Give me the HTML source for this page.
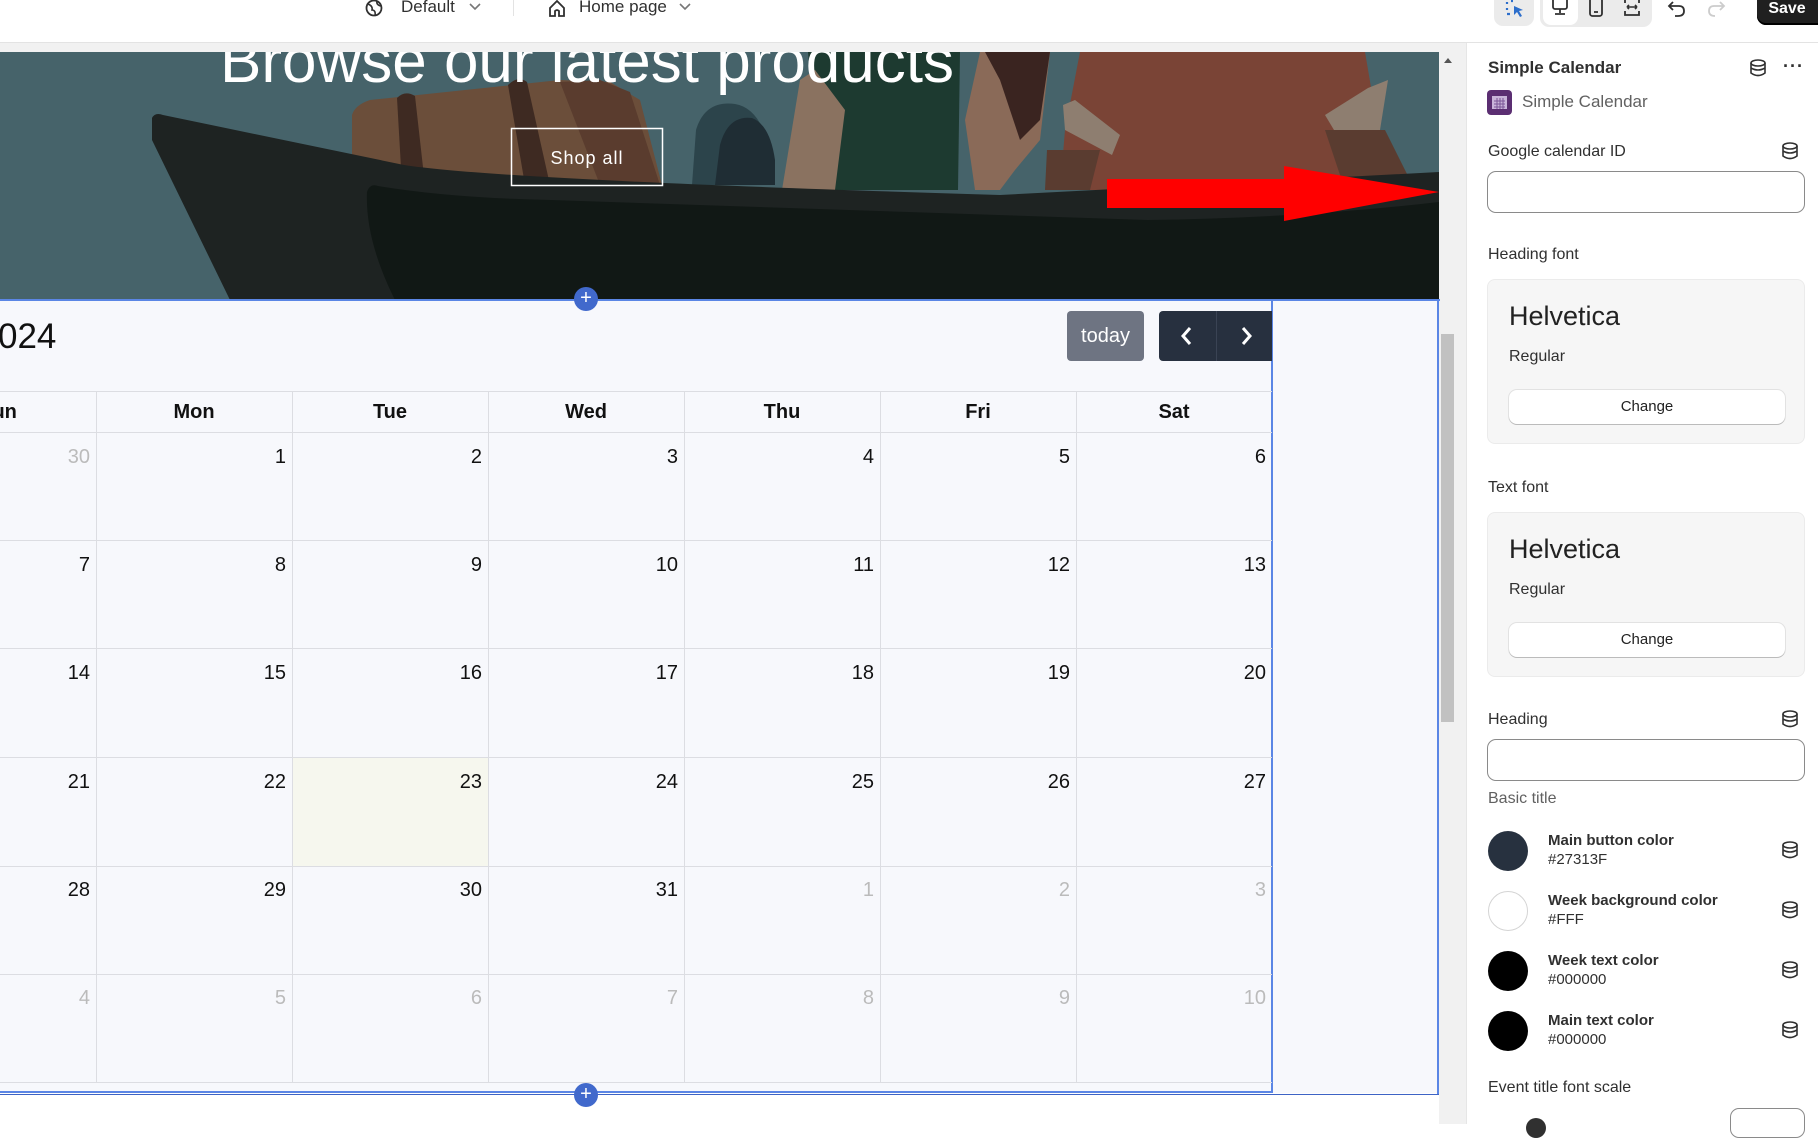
<!DOCTYPE html>
<html><head><meta charset="utf-8">
<style>
*{box-sizing:border-box;margin:0;padding:0}
body{width:1818px;height:1124px;overflow:hidden;background:#fff;font-family:"Liberation Sans",Arial,sans-serif;position:relative;color:#303030}
.abs{position:absolute}
.top{left:0;top:0;width:1818px;height:43px;background:#fff;border-bottom:1px solid #e3e3e3}
.gap{left:0;top:43px;width:1466px;height:9px;background:#f1f1f1}
.cal{left:0;top:301px;width:1439px;height:792px;background:#f7f8fc}
.col{position:absolute;top:392px;height:690px;width:1px;background:#dcdde2}
.row{position:absolute;left:0;width:1272px;height:1px;background:#dcdde2}
.dh{position:absolute;top:392px;height:40px;line-height:40px;text-align:center;font-weight:bold;font-size:20px;color:#111;width:196px}
.dn{position:absolute;font-size:20px;color:#111;text-align:right;width:180px}
.g{color:#bbb}
.panel{left:1466px;top:43px;width:352px;height:1081px;background:#fff;border-left:1px solid #e6e6e6}
.lbl{position:absolute;left:1488px;font-size:16px;color:#303030}
.inp{position:absolute;left:1487px;width:318px;border:1px solid #8a8a8a;border-radius:9px;background:#fff}
.box{position:absolute;left:1487px;width:318px;height:165px;background:#f6f6f6;border:1px solid #ebebeb;border-radius:8px}
.hv{position:absolute;left:21px;top:21px;font-size:27px;color:#222}
.rg{position:absolute;left:21px;top:68px;font-size:16px;color:#303030}
.ch{position:absolute;left:21px;top:110px;width:276px;height:34px;background:#fff;border-radius:8px;box-shadow:0 1px 0 #bbb,0 0 0 1px #e2e2e2;text-align:center;line-height:34px;font-size:15px;color:#222}
.sw{position:absolute;left:1488px;width:40px;height:40px;border-radius:50%}
.swt{position:absolute;left:1548px;font-size:15px;line-height:19px}
.swt b{color:#303030}
.db{position:absolute;left:1781px}
</style></head><body>
<div class="abs top"></div>
<svg class="abs" style="left:364px;top:0" width="20" height="18" viewBox="0 0 20 18"><circle cx="10" cy="8" r="7.5" fill="none" stroke="#303030" stroke-width="1.8"/><path d="M4 4 Q9 6 8 10 Q12 10 11 16 M13 1 Q12 5 17 6" fill="none" stroke="#303030" stroke-width="1.6"/></svg>
<div class="abs" style="left:401px;top:-3px;font-size:17px;color:#303030">Default</div>
<svg class="abs" style="left:469px;top:3px" width="12" height="8"><path d="M1 1 L6 6 L11 1" fill="none" stroke="#777" stroke-width="1.6"/></svg>
<div class="abs" style="left:513px;top:0;width:1px;height:16px;background:#e3e3e3"></div>
<svg class="abs" style="left:547px;top:0" width="20" height="18"><path d="M3 16 V8 L10 1 L17 8 V16 H12 V11 Q10 9 8 11 V16 Z" fill="none" stroke="#303030" stroke-width="1.8"/></svg>
<div class="abs" style="left:579px;top:-3px;font-size:17px;color:#303030">Home page</div>
<svg class="abs" style="left:679px;top:3px" width="12" height="8"><path d="M1 1 L6 6 L11 1" fill="none" stroke="#777" stroke-width="1.6"/></svg>
<div class="abs" style="left:1494px;top:-10px;width:40px;height:36px;background:#ebebeb;border-radius:9px"></div>
<svg class="abs" style="left:1505px;top:0" width="20" height="18"><path d="M2 2 V4 M2 8 V10 M2 14 H5 M6 1 H8" stroke="#2c6ecb" stroke-width="2.2"/><path d="M9 6 L18 10 L14 11 L17 16 L15 17 L12 12 L9 15 Z" fill="#2c6ecb"/></svg>
<div class="abs" style="left:1540px;top:-10px;width:112px;height:37px;background:#ebebeb;border-radius:9px"></div>
<div class="abs" style="left:1543px;top:-10px;width:35px;height:35px;background:#fff;border-radius:8px"></div>
<svg class="abs" style="left:1550px;top:0" width="20" height="18"><rect x="3" y="-2" width="14" height="11" rx="2" fill="none" stroke="#303030" stroke-width="1.8"/><path d="M10 9 V13 M5 14 H15" stroke="#303030" stroke-width="1.8"/></svg>
<svg class="abs" style="left:1587px;top:0" width="18" height="18"><rect x="3" y="-2" width="12" height="18" rx="2.5" fill="none" stroke="#303030" stroke-width="1.8"/><path d="M7 12 H11" stroke="#303030" stroke-width="1.8"/></svg>
<svg class="abs" style="left:1622px;top:0" width="20" height="18"><path d="M3 3 V-1 H17 V3 M3 11 V15 H17 V11" fill="none" stroke="#303030" stroke-width="1.8"/><path d="M5 7 H15 M5 7 L7 5 M5 7 L7 9 M15 7 L13 5 M15 7 L13 9" stroke="#303030" stroke-width="1.6" fill="none"/></svg>
<svg class="abs" style="left:1667px;top:0" width="20" height="18"><path d="M6 2 L2 6 L6 10 M2 6 H12 Q17 6 17 11 Q17 16 11 16 H8" fill="none" stroke="#303030" stroke-width="1.8"/></svg>
<svg class="abs" style="left:1706px;top:0" width="20" height="18"><path d="M14 2 L18 6 L14 10 M18 6 H8 Q3 6 3 11 Q3 16 9 16" fill="none" stroke="#ccc" stroke-width="1.8"/></svg>
<div class="abs" style="left:1757px;top:-10px;width:70px;height:35px;background:#202020;border-radius:9px;box-shadow:inset 0 -2px 0 #000;color:#fff;font-weight:bold;font-size:16px;text-align:center;line-height:26px;padding-top:6px;padding-right:10px">Save</div>
<div class="abs gap"></div>

<!-- hero -->
<svg class="abs" style="left:0;top:52px" width="1439" height="248" viewBox="0 52 1439 248">
<rect x="0" y="52" width="1439" height="248" fill="#46636a"/>
<!-- luggage -->
<path d="M352 115 Q355 105 370 100 L560 80 L610 82 L640 100 L662 185 L352 185 Z" fill="#6b4e3a"/>
<path d="M397 98 Q405 90 415 96 L425 185 L402 185 Z" fill="#3e2a22"/>
<path d="M508 85 Q518 75 527 82 L550 185 L525 185 Z" fill="#3e2a22"/>
<path d="M560 82 L600 80 L630 92 L660 185 L600 185 Z" fill="#5a3c2e"/>
<!-- arches -->
<path d="M692 185 L696 130 Q705 100 735 104 Q760 108 770 150 L770 185 Z" fill="#2c444b"/>
<path d="M715 185 L720 145 Q728 115 752 118 Q770 125 775 160 L775 185 Z" fill="#1f2d34"/>
<!-- figures -->
<path d="M808 52 L960 52 L958 190 L820 190 Z" fill="#1d3a30"/>
<path d="M800 80 L815 70 L845 110 L835 190 L782 190 Z" fill="#8a7260"/>
<path d="M980 52 L1050 52 L1040 140 L1015 170 L1000 190 L975 190 L965 120 Z" fill="#8a6a58"/>
<path d="M985 52 L1050 52 L1040 120 L1020 140 L1000 80 Z" fill="#3a2420"/>
<path d="M1080 52 L1365 52 L1380 140 L1360 190 L1060 190 L1065 130 Z" fill="#7a4436"/>
<path d="M1063 105 L1075 100 L1120 135 L1112 155 L1065 130 Z" fill="#8e7e70"/>
<path d="M1368 88 L1388 80 L1380 130 L1340 140 L1325 115 Z" fill="#8e7e70"/>
<path d="M1325 130 L1385 130 L1415 190 L1345 190 Z" fill="#5a3c30"/>
<path d="M1047 150 L1100 150 L1090 190 L1045 190 Z" fill="#5a3c30"/>
<!-- boat -->
<path d="M152 118 Q155 112 163 115 L404 165 Q500 180 1000 195 L1439 172 L1439 300 L230 300 L152 140 Z" fill="#1e2322"/>
<path d="M367 192 Q370 183 378 186 Q450 198 551 200 L1148 220 Q1300 218 1439 202 L1439 300 L395 300 Q365 240 367 192 Z" fill="#111815"/>
<text x="587" y="82" text-anchor="middle" font-family="Liberation Sans,sans-serif" font-size="62" fill="#fff">Browse our latest products</text>
<rect x="511.5" y="128.5" width="151" height="57" fill="none" stroke="#fff" stroke-width="1.5"/>
<text x="587" y="164" text-anchor="middle" font-family="Liberation Sans,sans-serif" font-size="18" fill="#fff" letter-spacing="1">Shop all</text>
<path d="M1107 179 H1284 V166 L1439 192 L1284 221 V208 H1107 Z" fill="#ff0000"/>
</svg>
<svg class="abs" style="left:1439px;top:160px" width="30" height="70"><path d="M0 12 L29 34 L0 56 Z" fill="#ff0000"/></svg>
<div class="abs" style="left:1439px;top:52px;width:27px;height:1072px;background:#f1f1f1"></div>
<div class="abs" style="left:1441px;top:334px;width:13px;height:388px;background:#c1c1c1"></div>
<div class="abs" style="left:1444px;top:58px;width:0;height:0;border-left:4px solid transparent;border-right:4px solid transparent;border-bottom:5px solid #555"></div>

<!-- calendar -->
<div class="abs cal"></div>
<div class="abs" style="left:0;top:299px;width:1440px;height:2px;background:#5b86e5"></div>
<div class="abs" style="left:1437px;top:300px;width:2px;height:795px;background:#5b86e5"></div>
<div class="abs" style="left:1271px;top:301px;width:2px;height:790px;background:#5b86e5"></div>
<div class="abs" style="left:0;top:1091px;width:1273px;height:2px;background:#5b86e5"></div>
<div class="abs" style="left:0;top:1094px;width:1439px;height:1px;background:#3d63c5"></div>
<div class="abs" style="left:574px;top:287px;width:24px;height:24px;border-radius:50%;background:#4169cc;color:#fff;font-size:20px;line-height:23px;text-align:center">+</div>
<div class="abs" style="left:574px;top:1083px;width:24px;height:24px;border-radius:50%;background:#4169cc;color:#fff;font-size:20px;line-height:23px;text-align:center">+</div>
<div class="abs" style="left:-2px;top:317px;font-size:35px;color:#111">024</div>
<div class="abs" style="left:1067px;top:311px;width:77px;height:50px;background:#6e7482;border-radius:4px;color:#fff;font-size:20px;text-align:center;line-height:50px">today</div>
<div class="abs" style="left:1159px;top:311px;width:113px;height:50px;background:#27303f;border-radius:4px 0 0 4px"></div>
<div class="abs" style="left:1216px;top:311px;width:1px;height:50px;background:#3a4354"></div>
<svg class="abs" style="left:1159px;top:311px" width="113" height="50"><path d="M31 17 L24 25 L31 33 M84 17 L91 25 L84 33" fill="none" stroke="#fff" stroke-width="3"/></svg>
<div class="abs" style="left:292px;top:757px;width:196px;height:109px;background:#f6f7ee"></div>
<div class="row" style="top:391px"></div>
<div class="row" style="top:432px"></div>
<div class="row" style="top:540px"></div>
<div class="row" style="top:648px"></div>
<div class="row" style="top:757px"></div>
<div class="row" style="top:866px"></div>
<div class="row" style="top:974px"></div>
<div class="row" style="top:1082px"></div>
<div class="col" style="left:96px"></div>
<div class="col" style="left:292px"></div>
<div class="col" style="left:488px"></div>
<div class="col" style="left:684px"></div>
<div class="col" style="left:880px"></div>
<div class="col" style="left:1076px"></div>
<div class="dh" style="left:-100px">Sun</div>
<div class="dh" style="left:96px">Mon</div>
<div class="dh" style="left:292px">Tue</div>
<div class="dh" style="left:488px">Wed</div>
<div class="dh" style="left:684px">Thu</div>
<div class="dh" style="left:880px">Fri</div>
<div class="dh" style="left:1076px">Sat</div>

<!-- panel -->
<div class="abs panel"></div>
<div class="abs" style="left:1488px;top:58px;font-size:17px;font-weight:bold;color:#303030">Simple Calendar</div>
<svg class="abs db" style="left:1749px;top:59px" width="18" height="18"><g fill="none" stroke="#303030" stroke-width="1.6"><ellipse cx="9" cy="4" rx="7" ry="3"/><path d="M2 4 V14 Q9 19 16 14 V4 M2 9 Q9 13 16 9"/></g></svg>
<div class="abs" style="left:1783px;top:56px;font-size:18px;font-weight:bold;letter-spacing:1px">···</div>
<div class="abs" style="left:1487px;top:90px;width:25px;height:25px;border-radius:4px;background:#5b2e72"></div>
<svg class="abs" style="left:1491px;top:93px" width="17" height="18"><rect x="1" y="3" width="15" height="13" fill="#c9b4da"/><path d="M3 8 H14 M3 11 H14 M3 14 H14 M6 5 V16 M9 5 V16 M12 5 V16" stroke="#7b5597" stroke-width="1"/></svg>
<div class="abs" style="left:1522px;top:92px;font-size:17px;color:#616161">Simple Calendar</div>
<div class="lbl" style="top:143px">Google calendar ID</div>
<svg class="abs db" style="top:142px" width="18" height="18"><g fill="none" stroke="#303030" stroke-width="1.6"><ellipse cx="9" cy="4" rx="7" ry="3"/><path d="M2 4 V14 Q9 19 16 14 V4 M2 9 Q9 13 16 9"/></g></svg>
<div class="inp" style="top:171px;height:42px"></div>
<div class="lbl" style="top:246px">Heading font</div>
<div class="box" style="top:279px"><div class="hv">Helvetica</div><div class="rg">Regular</div><div class="ch">Change</div></div>
<div class="lbl" style="top:479px">Text font</div>
<div class="box" style="top:512px"><div class="hv">Helvetica</div><div class="rg">Regular</div><div class="ch">Change</div></div>
<div class="lbl" style="top:711px">Heading</div>
<svg class="abs db" style="top:710px" width="18" height="18"><g fill="none" stroke="#303030" stroke-width="1.6"><ellipse cx="9" cy="4" rx="7" ry="3"/><path d="M2 4 V14 Q9 19 16 14 V4 M2 9 Q9 13 16 9"/></g></svg>
<div class="inp" style="top:739px;height:42px"></div>
<div class="lbl" style="top:790px;color:#616161">Basic title</div>

<div class="sw" style="top:831px;background:#27313f"></div>
<div class="swt" style="top:831px"><b>Main button color</b><br>#27313F</div>
<div class="sw" style="top:891px;background:#fff;border:1px solid #d4d4d4"></div>
<div class="swt" style="top:891px"><b>Week background color</b><br>#FFF</div>
<div class="sw" style="top:951px;background:#000"></div>
<div class="swt" style="top:951px"><b>Week text color</b><br>#000000</div>
<div class="sw" style="top:1011px;background:#000"></div>
<div class="swt" style="top:1011px"><b>Main text color</b><br>#000000</div>
<svg class="abs db" style="top:841px" width="18" height="18"><g fill="none" stroke="#303030" stroke-width="1.6"><ellipse cx="9" cy="4" rx="7" ry="3"/><path d="M2 4 V14 Q9 19 16 14 V4 M2 9 Q9 13 16 9"/></g></svg>
<svg class="abs db" style="top:901px" width="18" height="18"><g fill="none" stroke="#303030" stroke-width="1.6"><ellipse cx="9" cy="4" rx="7" ry="3"/><path d="M2 4 V14 Q9 19 16 14 V4 M2 9 Q9 13 16 9"/></g></svg>
<svg class="abs db" style="top:961px" width="18" height="18"><g fill="none" stroke="#303030" stroke-width="1.6"><ellipse cx="9" cy="4" rx="7" ry="3"/><path d="M2 4 V14 Q9 19 16 14 V4 M2 9 Q9 13 16 9"/></g></svg>
<svg class="abs db" style="top:1021px" width="18" height="18"><g fill="none" stroke="#303030" stroke-width="1.6"><ellipse cx="9" cy="4" rx="7" ry="3"/><path d="M2 4 V14 Q9 19 16 14 V4 M2 9 Q9 13 16 9"/></g></svg>
<div class="lbl" style="top:1079px">Event title font scale</div>
<div class="abs" style="left:1730px;top:1108px;width:75px;height:30px;border:1px solid #8a8a8a;border-radius:9px;background:#fff"></div>
<div class="abs" style="left:1526px;top:1118px;width:20px;height:20px;border-radius:50%;background:#303030"></div>

<div class="dn g" style="left:-90px;top:446px">30</div>
<div class="dn" style="left:106px;top:446px">1</div>
<div class="dn" style="left:302px;top:446px">2</div>
<div class="dn" style="left:498px;top:446px">3</div>
<div class="dn" style="left:694px;top:446px">4</div>
<div class="dn" style="left:890px;top:446px">5</div>
<div class="dn" style="left:1086px;top:446px">6</div>
<div class="dn" style="left:-90px;top:554px">7</div>
<div class="dn" style="left:106px;top:554px">8</div>
<div class="dn" style="left:302px;top:554px">9</div>
<div class="dn" style="left:498px;top:554px">10</div>
<div class="dn" style="left:694px;top:554px">11</div>
<div class="dn" style="left:890px;top:554px">12</div>
<div class="dn" style="left:1086px;top:554px">13</div>
<div class="dn" style="left:-90px;top:662px">14</div>
<div class="dn" style="left:106px;top:662px">15</div>
<div class="dn" style="left:302px;top:662px">16</div>
<div class="dn" style="left:498px;top:662px">17</div>
<div class="dn" style="left:694px;top:662px">18</div>
<div class="dn" style="left:890px;top:662px">19</div>
<div class="dn" style="left:1086px;top:662px">20</div>
<div class="dn" style="left:-90px;top:771px">21</div>
<div class="dn" style="left:106px;top:771px">22</div>
<div class="dn" style="left:302px;top:771px">23</div>
<div class="dn" style="left:498px;top:771px">24</div>
<div class="dn" style="left:694px;top:771px">25</div>
<div class="dn" style="left:890px;top:771px">26</div>
<div class="dn" style="left:1086px;top:771px">27</div>
<div class="dn" style="left:-90px;top:879px">28</div>
<div class="dn" style="left:106px;top:879px">29</div>
<div class="dn" style="left:302px;top:879px">30</div>
<div class="dn" style="left:498px;top:879px">31</div>
<div class="dn g" style="left:694px;top:879px">1</div>
<div class="dn g" style="left:890px;top:879px">2</div>
<div class="dn g" style="left:1086px;top:879px">3</div>
<div class="dn g" style="left:-90px;top:987px">4</div>
<div class="dn g" style="left:106px;top:987px">5</div>
<div class="dn g" style="left:302px;top:987px">6</div>
<div class="dn g" style="left:498px;top:987px">7</div>
<div class="dn g" style="left:694px;top:987px">8</div>
<div class="dn g" style="left:890px;top:987px">9</div>
<div class="dn g" style="left:1086px;top:987px">10</div>
</body></html>
